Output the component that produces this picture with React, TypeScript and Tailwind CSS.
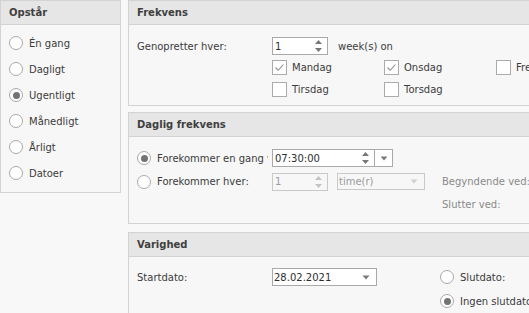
import React from "react";

function Panel({
  title,
  className,
  children,
}: {
  title: string;
  className: string;
  children: React.ReactNode;
}) {
  return (
    <div className={`flex shrink-0 flex-col border border-[#d3d3d3] bg-[#f7f7f7] ${className}`}>
      <div className="flex h-[24px] shrink-0 items-center border-b border-[#d3d3d3] bg-[#e6e6e6] px-[8px] font-bold text-[#3f3f3f]">
        {title}
      </div>
      <div className="flex-1">{children}</div>
    </div>
  );
}

function Radio({ checked }: { checked?: boolean }) {
  return (
    <span className="flex h-[14px] w-[14px] shrink-0 items-center justify-center rounded-full border border-[#a9a9a9] bg-white">
      {checked && <span className="h-[7px] w-[7px] rounded-full bg-[#737373]" />}
    </span>
  );
}

function Check({ checked }: { checked?: boolean }) {
  return (
    <span className="flex h-[15px] w-[15px] shrink-0 items-center justify-center border border-[#ababab] bg-white">
      {checked && (
        <svg width="11" height="11" viewBox="0 0 11 11">
          <path d="M1.5 5.5 L4.2 8.3 L9.5 2.5" fill="none" stroke="#8c8c8c" strokeWidth="1.1" />
        </svg>
      )}
    </span>
  );
}

function SpinArrows({ color = "#777" }: { color?: string }) {
  return (
    <svg width="9" height="14" viewBox="0 0 9 14" className="shrink-0">
      <path d="M4.5 1 L8 5 L1 5 Z" fill={color} />
      <path d="M4.5 13 L8 9 L1 9 Z" fill={color} />
    </svg>
  );
}

function DropArrow({ color = "#7a7a7a" }: { color?: string }) {
  return (
    <svg width="8" height="5" viewBox="0 0 8 5" className="shrink-0">
      <path d="M0.5 0.5 L7.5 0.5 L4 4.5 Z" fill={color} />
    </svg>
  );
}

function SpinEdit({
  value,
  width,
  disabled,
}: {
  value: string;
  width: string;
  disabled?: boolean;
}) {
  return (
    <div
      className={`flex h-[18px] items-center border pl-[2px] pr-[4px] ${width} ${
        disabled ? "border-[#c9c9c9] bg-[#f7f7f7] text-[#9a9a9a]" : "border-[#a9a9a9] bg-white text-[#2e2e2e]"
      }`}
    >
      <span className="flex-1">{value}</span>
      <SpinArrows color={disabled ? "#c4c4c4" : "#777"} />
    </div>
  );
}

const days = [
  ["Mandag", true],
  ["Onsdag", true],
  ["Fredag", false],
  ["Tirsdag", false],
  ["Torsdag", false],
] as const;

export default function App() {
  return (
    <div className="flex h-[313px] w-[529px] gap-[7px] overflow-hidden bg-[#f8f8f8] font-['DejaVu_Sans',sans-serif] text-[10px] text-[#3b3b3b]">
      {/* Opstår */}
      <Panel title="Opstår" className="h-[193px] w-[121px]">
        <div className="flex flex-col pl-[8px] pt-[5px]">
          {["Én gang", "Dagligt", "Ugentligt", "Månedligt", "Årligt", "Datoer"].map((t) => (
            <div key={t} className="flex h-[26px] items-center gap-[6px]">
              <Radio checked={t === "Ugentligt"} />
              <span>{t}</span>
            </div>
          ))}
        </div>
      </Panel>

      <div className="flex w-[430px] shrink-0 flex-col">
        {/* Frekvens */}
        <Panel title="Frekvens" className="h-[106px]">
          <div className="pl-[8px] pt-[12px]">
            <div className="flex h-[18px] items-center">
              <span className="w-[135px]">Genopretter hver:</span>
              <SpinEdit value="1" width="w-[56px]" />
              <span className="ml-[10px]">week(s) on</span>
            </div>
            <div className="ml-[135px] mt-[5px] grid grid-cols-[112px_112px_112px]">
              {days.map(([d, c]) => (
                <div key={d} className="flex h-[22px] items-start gap-[5px]">
                  <Check checked={c} />
                  <span className="leading-[15px]">{d}</span>
                </div>
              ))}
            </div>
          </div>
        </Panel>

        {/* Daglig frekvens */}
        <Panel title="Daglig frekvens" className="mt-[6px] h-[112px]">
          <div className="pl-[8px] pt-[12px]">
            <div className="flex h-[18px] items-center">
              <div className="flex w-[131px] items-center gap-[6px] whitespace-nowrap">
                <Radio checked />
                <span className="block w-[111px] overflow-hidden">Forekommer en gang ved</span>
              </div>
              <div className="ml-[4px] flex h-[18px] w-[121px] items-center border border-[#a9a9a9] bg-white text-[#2e2e2e]">
                <span className="flex-1 pl-[2px]">07:30:00</span>
                <span className="px-[4px]">
                  <SpinArrows />
                </span>
                <span className="flex h-full w-[18px] items-center justify-center border-l border-[#a9a9a9]">
                  <DropArrow />
                </span>
              </div>
            </div>
            <div className="mt-[6px] flex h-[17px] items-center">
              <div className="flex w-[135px] items-center gap-[6px]">
                <Radio />
                <span>Forekommer hver:</span>
              </div>
              <SpinEdit value="1" width="w-[56px] h-[17px]" disabled />
              <div className="ml-[9px] flex h-[17px] w-[88px] items-center border border-[#c9c9c9] pl-[1px] pr-[6px] text-[#9a9a9a]">
                <span className="flex-1">time(r)</span>
                <DropArrow color="#d0d0d0" />
              </div>
              <span className="ml-[17px] text-[#8a8a8a]">Begyndende ved:</span>
            </div>
            <div className="ml-[305px] mt-[6px] flex h-[17px] items-center text-[#8a8a8a]">Slutter ved:</div>
          </div>
        </Panel>

        {/* Varighed */}
        <Panel title="Varighed" className="mt-[8px] h-[100px]">
          <div className="flex pl-[8px] pt-[11px]">
            <div className="flex h-[18px] items-center">
              <span className="w-[135px]">Startdato:</span>
              <div className="flex h-[18px] w-[105px] items-center border border-[#a9a9a9] bg-white pl-[1px] pr-[6px] text-[#2e2e2e]">
                <span className="flex-1">28.02.2021</span>
                <DropArrow />
              </div>
            </div>
            <div className="ml-[63px] flex flex-col gap-[6px] whitespace-nowrap">
              <div className="flex h-[18px] items-center gap-[6px]">
                <Radio />
                <span>Slutdato:</span>
              </div>
              <div className="flex h-[18px] items-center gap-[6px]">
                <Radio checked />
                <span>Ingen slutdato</span>
              </div>
            </div>
          </div>
        </Panel>
      </div>
    </div>
  );
}
